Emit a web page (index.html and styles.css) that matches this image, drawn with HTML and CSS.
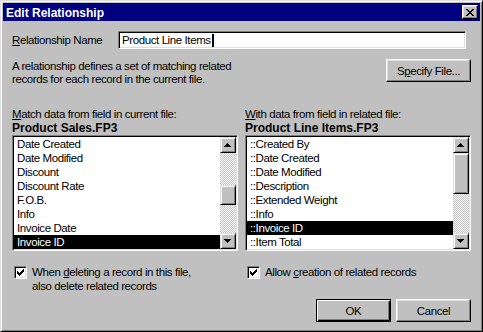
FILE: index.html
```html
<!DOCTYPE html>
<html>
<head>
  <meta charset="utf-8">
  <title>Edit Relationship</title>
  <link rel="stylesheet" href="styles.css">
</head>
<body>
  <div class="window">
    <div class="titlebar">
      <span class="title">Edit Relationship</span>
      <button class="close">
        <svg width="8" height="7" viewBox="0 0 8 7" shape-rendering="crispEdges">
          <path d="M0 0h2v1H0z M6 0h2v1H6z M1 1h2v1H1z M5 1h2v1H5z M2 2h4v1H2z M3 3h2v1H3z M2 4h4v1H2z M1 5h2v1H1z M5 5h2v1H5z M0 6h2v1H0z M6 6h2v1H6z"/>
        </svg>
      </button>
    </div>

    <div class="content">
      <div class="name-row">
        <label class="name-label"><u>R</u>elationship Name</label>
        <div class="textbox">Product Line Items<span class="caret"></span></div>
      </div>

      <div class="desc-row">
        <p class="desc">A relationship defines a set of matching related<br>records for each record in the current file.</p>
        <button class="btn specify">S<u>p</u>ecify File...</button>
      </div>

      <div class="columns">
        <div class="col">
          <div class="caption"><u>M</u>atch data from field in current file:</div>
          <div class="filename">Product Sales.FP3</div>
          <div class="listbox">
            <ul class="items">
              <li>Date Created</li>
              <li>Date Modified</li>
              <li>Discount</li>
              <li>Discount Rate</li>
              <li>F.O.B.</li>
              <li>Info</li>
              <li>Invoice Date</li>
              <li class="selected">Invoice ID</li>
            </ul>
            <div class="scrollbar">
              <div class="arrow">
                <svg width="14" height="14" viewBox="0 0 14 14" shape-rendering="crispEdges"><path d="M6 5h1v1H6z M5 6h3v1H5z M4 7h5v1H4z M3 8h7v1H3z"/></svg>
              </div>
              <div class="track">
                <div class="thumb thumb-left"></div>
              </div>
              <div class="arrow">
                <svg width="14" height="14" viewBox="0 0 14 14" shape-rendering="crispEdges"><path d="M3 5h7v1H3z M4 6h5v1H4z M5 7h3v1H5z M6 8h1v1H6z"/></svg>
              </div>
            </div>
          </div>
          <label class="check">
            <span class="box">
              <svg width="7" height="7" viewBox="0 0 7 7" shape-rendering="crispEdges"><path d="M6 0h1v1H6z M5 1h2v1H5z M0 2h1v1H0z M4 2h3v1H4z M0 3h2v1H0z M3 3h3v1H3z M0 4h5v1H0z M1 5h3v1H1z M2 6h1v1H2z"/></svg>
            </span>
            <span>When <u>d</u>eleting a record in this file,<br>also delete related records</span>
          </label>
        </div>

        <div class="col">
          <div class="caption"><u>W</u>ith data from field in related file:</div>
          <div class="filename">Product Line Items.FP3</div>
          <div class="listbox">
            <ul class="items">
              <li>::Created By</li>
              <li>::Date Created</li>
              <li>::Date Modified</li>
              <li>::Description</li>
              <li>::Extended Weight</li>
              <li>::Info</li>
              <li class="selected">::Invoice ID</li>
              <li>::Item Total</li>
            </ul>
            <div class="scrollbar">
              <div class="arrow">
                <svg width="14" height="14" viewBox="0 0 14 14" shape-rendering="crispEdges"><path d="M6 5h1v1H6z M5 6h3v1H5z M4 7h5v1H4z M3 8h7v1H3z"/></svg>
              </div>
              <div class="track">
                <div class="thumb thumb-right"></div>
              </div>
              <div class="arrow">
                <svg width="14" height="14" viewBox="0 0 14 14" shape-rendering="crispEdges"><path d="M3 5h7v1H3z M4 6h5v1H4z M5 7h3v1H5z M6 8h1v1H6z"/></svg>
              </div>
            </div>
          </div>
          <label class="check">
            <span class="box">
              <svg width="7" height="7" viewBox="0 0 7 7" shape-rendering="crispEdges"><path d="M6 0h1v1H6z M5 1h2v1H5z M0 2h1v1H0z M4 2h3v1H4z M0 3h2v1H0z M3 3h3v1H3z M0 4h5v1H0z M1 5h3v1H1z M2 6h1v1H2z"/></svg>
            </span>
            <span>Allow <u>c</u>reation of related records</span>
          </label>
        </div>
      </div>

      <div class="buttons">
        <button class="btn default">OK</button>
        <button class="btn">Cancel</button>
      </div>
    </div>
  </div>
</body>
</html>
```

FILE: styles.css
```css
body {
  margin: 0;
  background: #c0c0c0;
  font-family: "Liberation Sans", Arial, sans-serif;
  font-size: 11.5px;
  letter-spacing: -0.4px;
  color: #000;
}

u {
  text-underline-offset: 1px;
}

.window {
  box-sizing: border-box;
  width: 483px;
  height: 332px;
  padding: 2px;
  background: #c0c0c0;
  border: 1px solid;
  border-color: #dfdfdf #000 #000 #dfdfdf;
  box-shadow: inset 1px 1px #fff, inset -1px -1px #808080;
  display: flex;
  flex-direction: column;
}

.titlebar {
  height: 18px;
  background: #000080;
  color: #fff;
  display: flex;
  align-items: center;
  justify-content: space-between;
  padding: 0 2px 0 3px;
}

.title {
  font-weight: bold;
  font-size: 12px;
  letter-spacing: 0;
  padding-top: 1px;
}

.close {
  box-sizing: border-box;
  width: 16px;
  height: 14px;
  padding: 0;
  margin: 0;
  background: #c0c0c0;
  border: 1px solid;
  border-color: #fff #000 #000 #fff;
  box-shadow: inset -1px -1px #808080, inset 1px 1px #dfdfdf;
  display: flex;
  align-items: center;
  justify-content: center;
}

.content {
  flex: 1;
  padding: 10px 9px 0 9px;
  display: flex;
  flex-direction: column;
}

.name-row {
  display: flex;
  align-items: center;
}

.name-label {
  width: 106px;
}

.textbox {
  box-sizing: border-box;
  width: 348px;
  height: 18px;
  padding: 0 3px;
  line-height: 14px;
  background: #fff;
  border: 1px solid;
  border-color: #808080 #fff #fff #808080;
  box-shadow: inset 1px 1px #000, inset -1px -1px #dfdfdf;
  display: flex;
  align-items: center;
}

.caret {
  display: inline-block;
  width: 2px;
  height: 13px;
  background: #000;
  margin-left: 1px;
}

.desc-row {
  margin-top: 10px;
  display: flex;
  justify-content: space-between;
  align-items: flex-start;
}

.desc {
  margin: 1px 0 0;
  line-height: 13px;
}

.btn {
  box-sizing: border-box;
  height: 23px;
  padding: 0;
  font: inherit;
  letter-spacing: inherit;
  color: #000;
  background: #c0c0c0;
  border: 1px solid;
  border-color: #fff #000 #000 #fff;
  box-shadow: inset -1px -1px #808080, inset 1px 1px #dfdfdf;
}

.specify {
  width: 85px;
}

.columns {
  margin-top: 21px;
  display: flex;
  gap: 7px;
}

.col {
  width: 226px;
  display: flex;
  flex-direction: column;
}

.caption {
  line-height: 14px;
}

.filename {
  font-weight: bold;
  font-size: 12px;
  letter-spacing: 0;
  line-height: 14px;
}

.listbox {
  box-sizing: border-box;
  height: 116px;
  background: #fff;
  border: 1px solid;
  border-color: #808080 #fff #fff #808080;
  box-shadow: inset 1px 1px #000, inset -1px -1px #dfdfdf;
  padding: 1px;
  display: flex;
}

.items {
  flex: 1;
  list-style: none;
  margin: 0;
  padding: 0;
}

.items li {
  height: 14px;
  line-height: 14px;
  padding-left: 3px;
  white-space: nowrap;
}

.items li.selected {
  background: #000;
  color: #fff;
}

.scrollbar {
  width: 16px;
  display: flex;
  flex-direction: column;
}

.arrow,
.thumb {
  box-sizing: border-box;
  background: #c0c0c0;
  border: 1px solid;
  border-color: #dfdfdf #000 #000 #dfdfdf;
  box-shadow: inset 1px 1px #fff, inset -1px -1px #808080;
}

.arrow {
  height: 16px;
  display: flex;
}

.track {
  flex: 1;
  background-color: #c0c0c0;
  background-image: conic-gradient(#fff 25%, #c0c0c0 0 50%, #fff 0 75%, #c0c0c0 0);
  background-size: 2px 2px;
  display: flex;
  flex-direction: column;
}

.thumb-left {
  margin-top: 32px;
  height: 20px;
}

.thumb-right {
  height: 41px;
}

.check {
  margin-top: 14px;
  padding-left: 2px;
  display: flex;
  align-items: flex-start;
  gap: 5px;
  line-height: 14px;
}

.box {
  box-sizing: border-box;
  flex: none;
  width: 13px;
  height: 13px;
  margin-top: 1px;
  background: #fff;
  border: 1px solid;
  border-color: #808080 #fff #fff #808080;
  box-shadow: inset 1px 1px #000, inset -1px -1px #dfdfdf;
  display: flex;
  align-items: center;
  justify-content: center;
}

.buttons {
  margin-top: 6px;
  display: flex;
  justify-content: flex-end;
  gap: 5px;
}

.buttons .btn {
  width: 75px;
}

.btn.default {
  border-color: #000;
  box-shadow: inset 1px 1px #fff, inset -1px -1px #000, inset -2px -2px #808080;
}
```
